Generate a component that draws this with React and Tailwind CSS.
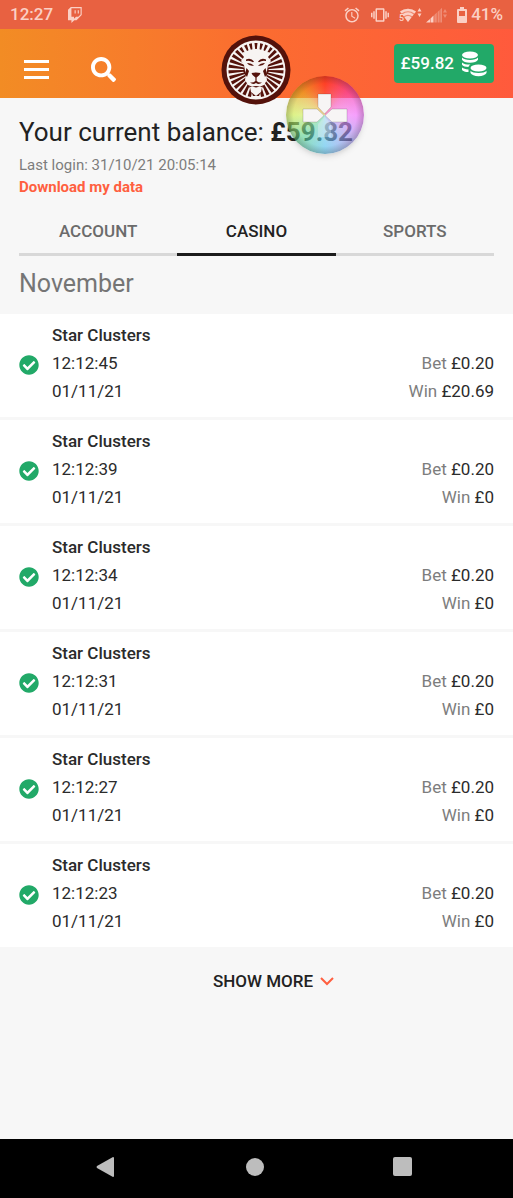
import { FaCheckCircle, FaSearch } from "react-icons/fa";
import { BsTwitch } from "react-icons/bs";
import { MdAlarm, MdVibration } from "react-icons/md";

const TABS = ["Account", "Casino", "Sports"];

const BETS = [
  { time: "12:12:45", date: "01/11/21", bet: "£0.20", win: "£20.69" },
  { time: "12:12:39", date: "01/11/21", bet: "£0.20", win: "£0" },
  { time: "12:12:34", date: "01/11/21", bet: "£0.20", win: "£0" },
  { time: "12:12:31", date: "01/11/21", bet: "£0.20", win: "£0" },
  { time: "12:12:27", date: "01/11/21", bet: "£0.20", win: "£0" },
  { time: "12:12:23", date: "01/11/21", bet: "£0.20", win: "£0" },
];

function WifiIcon() {
  return (
    <div className="flex items-end">
      <span className="-mr-1 text-[9px] leading-[9px]">5</span>
      <svg viewBox="0 0 22 16" className="h-4 w-[22px]" fill="currentColor">
        <path d="M0 4.500a13 13 0 0 1 16 0L8 15z" opacity=".35" />
        <path d="M0 4.500a13 13 0 0 1 16 0l-1.500 2a10.500 10.500 0 0 0-13 0zM2.300 7.500a9.500 9.500 0 0 1 11.400 0L12.300 9.300a7 7 0 0 0-8.600 0zM4.500 10.300a6 6 0 0 1 7 0L8 15z" />
        <path d="m19.500 1 2 3.500h-4zm0 9 2-3.500h-4z" />
      </svg>
    </div>
  );
}

function SignalIcon() {
  return (
    <svg viewBox="0 0 21 18" className="h-[18px] w-[21px]" fill="currentColor">
      <path d="M0 16.500 4 13v3.500zM4.500 12.500 7.500 9.500v7h-3z" />
      <path d="m8.300 9 2.500-2.500v10H8.300zM11.600 6l2-2v12.500h-2zM14.300 3.500l1.700-1.700v14.700h-1.700z" opacity=".4" />
      <path d="m19 3 2 3.500h-4zm0 9 2-3.500h-4z" opacity=".4" />
    </svg>
  );
}

function BatteryIcon() {
  return (
    <svg viewBox="0 0 10 16" className="h-4 w-[10px]" fill="currentColor">
      <path
        fillRule="evenodd"
        d="M3 0h4v2h2q1 0 1 1v12q0 1-1 1H1q-1 0-1-1V3q0-1 1-1h2zM2 4v5h6V4z"
      />
    </svg>
  );
}

function CoinsIcon() {
  return (
    <svg viewBox="0 0 26 26" className="size-[26px]" fill="currentColor">
      <ellipse cx="9" cy="4" rx="8" ry="3.500" />
      <path d="M1 6.500c2 3.300 14 3.300 16 0v2.300c-1 2-4 3-8 3s-7-1-8-3z" />
      <path d="M1 11.500c2 1.700 5 2.200 8.500 2.100-1.200.8-1.800 1.600-2 2.500-3-.1-5.500-.8-6.500-2.300z" />
      <path d="M1 16.500c1.500 1.200 3.500 1.700 6.500 1.900v2.700C4 21 2 20.300 1 19z" />
      <ellipse cx="17.500" cy="17" rx="8" ry="3.400" />
      <path d="M9.500 19.800c2 3 14 3 16 0v2.300c-1 2-4 3.200-8 3.200s-7-1.200-8-3.200z" />
    </svg>
  );
}

// full rays round the sides and bottom, short tufts over the brow
const RAYS = [
  46, 58, 70, 82, 94, 106, 118, 130, 142, 154, 166, 194, 206, 218, 230, 242, 254,
  266, 278, 290, 302, 314,
];
const TUFTS = [-35, -23, -12, 0, 12, 23, 35];

function LionLogo() {
  return (
    <svg viewBox="0 0 70 70" className="size-[70px]">
      <circle cx="35" cy="35" r="34.500" fill="#54120b" />
      <circle cx="35" cy="35" r="29.500" fill="#f7f4f2" />
      <g fill="#54120b">
        {RAYS.map((angle) => (
          <path
            key={angle}
            d="M33.300 7.500h3.400L35.800 24h-1.600z"
            transform={`rotate(${angle} 35 35)`}
          />
        ))}
        {TUFTS.map((angle) => (
          <path
            key={angle}
            d="M33.500 8h3l-.7 6h-1.600z"
            transform={`rotate(${angle} 35 35)`}
          />
        ))}
        <path d="M24 30l-2 6 4 8 2 7 4 10h6l4-10 2-7 4-8-2-6z" />
      </g>
      <path
        d="M22 17l5 1 4-3 4 1.500 4-1.500 4 3 5-1-1 5 3 4-3 4-1 6-1 3 1 6-3 5-5 2h-6l-5-2-3-5 1-6-1-3-1-6-3-4 3-4z"
        fill="#f7f4f2"
      />
      <path d="M29 52q6-1.500 12 0l-1 5-5 4-5-4z" fill="#f7f4f2" />
      <g fill="#54120b">
        <path d="M25 24.500q5-2 8 2l-1 .8q-3-2.300-7-1.300zM45 24.500q-5-2-8 2l1 .8q3-2.300 7-1.300z" />
        <path d="M26 28q4-.3 7 2.500-5 1-7-2.500zM44 28q-4-.3-7 2.500 5 1 7-2.500z" />
        <path d="M30.500 38q4.500-1 9 0-.5 2.600-3.900 4.500v3.500q2 2 5.400 1.500-3 2.500-6 .5-3 2-6-.5 3.400.5 5.400-1.500v-3.500q-3.400-1.900-3.900-4.500z" />
        <path d="M25.500 33l2.500 3-2 6-2-3zM44.500 33l-2.500 3 2 6 2-3z" />
        <path d="M31 51.500q4-1 8 0l-4 1z" />
      </g>
    </svg>
  );
}

function GameOrb() {
  return (
    <div className="absolute top-[76px] left-1/2 ml-[29px] size-[78px] overflow-hidden rounded-full shadow-md">
      <div className="size-full bg-[conic-gradient(#ff3020b3,#f83cb0a6_45deg,#f570ffa6_90deg,#a58cf099_130deg,#50c0f099_180deg,#50d09099_225deg,#d0f050a6_270deg,#e8a820a6_315deg,#ff3020b3)]" />
      <div className="absolute inset-0 rounded-full bg-[radial-gradient(closest-side,#ffffff40,#ffffff1a_55%,transparent_80%,#00000033)]" />
      <svg viewBox="0 0 78 78" className="absolute inset-0" fill="#f7f5f5">
        <g stroke="#00000026">
          <path d="M32 18h13v13l-6.500 7-6.500-7z" />
          <path d="M17 33h14l7 6.500-7 6.500H17z" />
          <path d="M61 33H46l-7 6.500 7 6.500h15z" />
        </g>
        <path d="M32 61h13V48l-6.500-7-6.500 7z" opacity=".3" />
      </svg>
    </div>
  );
}

function StatusBar() {
  return (
    <div className="flex h-[29px] items-center justify-between bg-[#e86141] px-[10px] text-[17px] font-medium text-[#fbd0c5]">
      <div className="flex items-center gap-[14px]">
        <span>12:27</span>
        <BsTwitch className="size-4" />
      </div>
      <div className="flex items-center gap-[10px]">
        <MdAlarm className="size-[18px]" />
        <MdVibration className="size-[18px]" />
        <div className="flex items-center gap-1">
          <WifiIcon />
          <SignalIcon />
        </div>
        <div className="flex items-center gap-1">
          <BatteryIcon />
          <span>41%</span>
        </div>
      </div>
    </div>
  );
}

function Header() {
  return (
    <header className="grid h-[69px] grid-cols-3 items-center bg-linear-to-r from-[#f28c24] via-[#fb6c30] to-[#ff5a3c] px-[19px] text-white">
      <div className="flex items-center gap-[42px] pt-3 pl-[5px]">
        <button type="button" aria-label="Menu" className="flex w-[25px] flex-col gap-[5px]">
          <span className="h-[3px] w-full bg-white" />
          <span className="h-[3px] w-full bg-white" />
          <span className="h-[3px] w-full bg-white" />
        </button>
        <button type="button" aria-label="Search">
          <FaSearch className="size-[25px]" />
        </button>
      </div>
      {/* the badge hangs over the bottom edge of the bar */}
      <a href="#home" aria-label="Home" className="-mb-2 justify-self-center pt-[5px]">
        <LionLogo />
      </a>
      <button
        type="button"
        className="flex h-[39px] items-center gap-[7px] justify-self-end rounded bg-[#22a968] px-[7px] text-[17px] font-medium"
      >
        £59.82
        <CoinsIcon />
      </button>
    </header>
  );
}

function BetRow({ bet }) {
  return (
    <li className="flex items-center bg-white px-[19px] pt-[7px] pb-3 text-[17px] leading-7 text-[#2b2b2b]">
      <FaCheckCircle className="mt-1 mr-[13px] size-5 shrink-0 text-[#22a968]" />
      <div className="flex-1">
        <h3 className="font-medium">Star Clusters</h3>
        <p>{bet.time}</p>
        <p>{bet.date}</p>
      </div>
      <div className="self-end text-right text-[#7d7d7d]">
        <p>
          Bet <span className="text-[#2b2b2b]">{bet.bet}</span>
        </p>
        <p>
          Win <span className="text-[#2b2b2b]">{bet.win}</span>
        </p>
      </div>
    </li>
  );
}

function NavBar() {
  return (
    <nav className="flex h-[59px] items-center justify-between bg-black pr-[101px] pb-1 pl-24 text-[#bdbdbd]">
      <button type="button" aria-label="Back">
        <svg viewBox="0 0 20 20" className="size-5" fill="currentColor">
          <path d="M17 0q1 0 1 1v18q0 1-1 1L1 11q-1-1 0-2z" />
        </svg>
      </button>
      <button type="button" aria-label="Home" className="size-[18px] rounded-full bg-[#bdbdbd]" />
      <button type="button" aria-label="Recent apps" className="size-[19px] rounded-xs bg-[#bdbdbd]" />
    </nav>
  );
}

function App() {
  return (
    <div className="relative flex min-h-screen flex-col bg-[#f7f7f7] font-[Roboto,sans-serif] text-[#222]">
      <StatusBar />
      <Header />
      <main className="flex-1">
        <section className="px-[19px] pt-[18px]">
          <h1 className="text-[26px] leading-8">
            Your current balance: <b>£59.82</b>
          </h1>
          <p className="mt-[6px] text-[15px] leading-[22px] text-[#7d7d7d]">
            Last login: 31/10/21 20:05:14
          </p>
          <a href="#data" className="block text-[15px] leading-[22px] font-bold text-[#ff5f40]">
            Download my data
          </a>
          <div role="tablist" className="mt-2 grid grid-cols-3">
            {TABS.map((tab) => (
              <button
                key={tab}
                type="button"
                role="tab"
                aria-selected={tab === "Casino"}
                className="h-[50px] border-b-[3px] border-[#d8d8d8] pt-1 text-[17px] font-medium text-[#6b6b6b] uppercase aria-selected:border-[#1c1c1c] aria-selected:text-[#222]"
              >
                {tab}
              </button>
            ))}
          </div>
          <h2 className="pt-3 pb-[14px] text-[25px] leading-8 text-[#757575]">November</h2>
        </section>
        <ul className="flex flex-col gap-[3px]">
          {BETS.map((bet) => (
            <BetRow key={bet.time} bet={bet} />
          ))}
        </ul>
        <button
          type="button"
          className="mx-auto mt-5 flex items-center gap-[7px] pl-[34px] text-[17px] leading-7 font-medium"
        >
          SHOW MORE
          <svg viewBox="0 0 14 9" className="h-[9px] w-[14px]" fill="none">
            <path d="m1 1 6 6 6-6" stroke="#ff5f40" strokeWidth="2" />
          </svg>
        </button>
      </main>
      <NavBar />
      <GameOrb />
    </div>
  );
}

export default App;
